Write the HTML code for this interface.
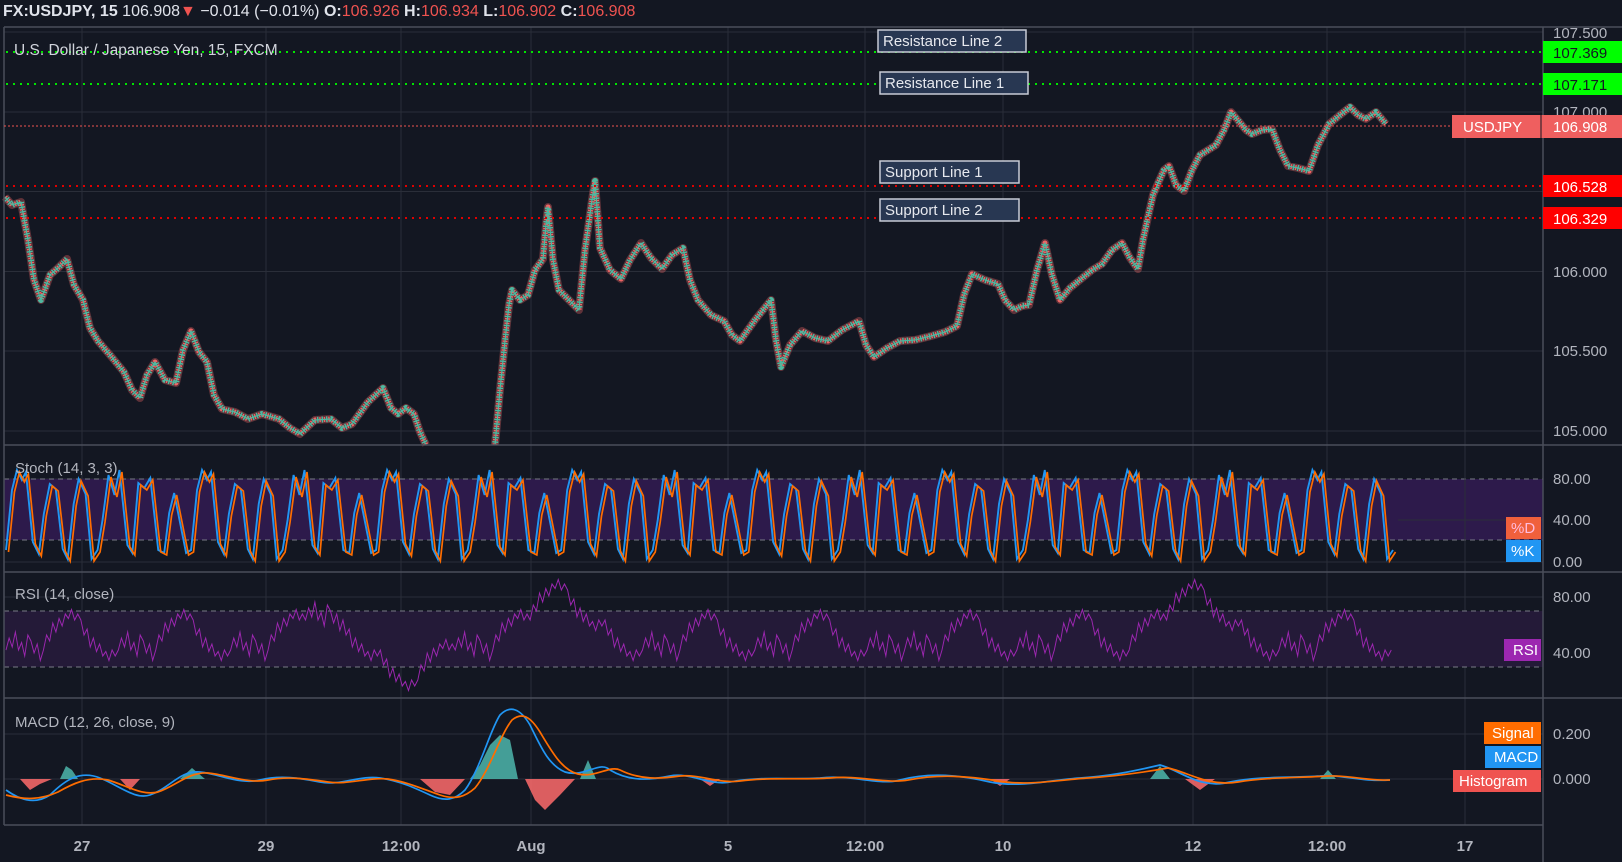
<!DOCTYPE html>
<html><head><meta charset="utf-8">
<style>
html,body{margin:0;padding:0;background:#131722;width:1622px;height:862px;overflow:hidden;}
svg{position:absolute;left:0;top:0}
text{font-family:"Liberation Sans",sans-serif;}
</style></head><body>
<svg width="1622" height="862" xmlns="http://www.w3.org/2000/svg">
<rect width="1622" height="862" fill="#131722"/>
<g stroke="#2a2e39" stroke-width="1">
<path d="M82 27V825M266 27V825M401 27V825M531 27V825M728 27V825M865 27V825M1003 27V825M1193 27V825M1327 27V825M1465 27V825"/>
<path d="M4 32H1543M4 112H1543M4 191.5H1543M4 271.5H1543M4 351H1543M4 431H1543M4 479H1543M4 520H1543M4 562H1543M4 597H1543M4 653H1543M4 734H1543M4 779H1543"/>
</g>
<rect x="4" y="479" width="1539" height="61" fill="#2d1a4b"/>
<rect x="4" y="611" width="1539" height="56" fill="#241a38"/>
<g stroke="#787b86" stroke-width="1" stroke-dasharray="5,4">
<path d="M4 479H1543M4 540H1543M4 611H1543M4 667H1543"/>
</g>
<defs>
<path id="pr" d="M5 197L12 205L21 202L28 240L34 280L41 300L50 275L58 268L67 259L74 285L83 300L90 328L98 341L110 355L124 372L132 390L140 398L147 375L155 362L165 380L176 383L183 350L191 331L199 352L207 362L214 395L222 409L235 412L248 419L262 414L279 419L290 428L300 434L315 420L331 419L342 428L352 424L368 402L383 388L391 408L398 414L406 408L414 414L420 432L426 445 M495 445L500 390L505 341L509 305L512 290L520 300L528 295L535 270L543 259L546 225L548 207L553 260L559 290L569 300L579 310L585 250L592 200L595 181L600 248L610 270L621 279L630 260L641 243L651 258L662 269L672 255L683 248L690 280L698 300L711 315L724 321L732 335L740 341L755 320L771 300L776 340L781 367L790 345L802 331L815 338L828 341L842 330L859 321L866 345L874 357L887 348L900 341L915 340L931 336L945 332L957 326L964 295L972 274L985 280L998 284L1005 300L1014 310L1022 306L1029 305L1037 270L1045 243L1052 275L1060 300L1070 288L1081 279L1092 270L1102 264L1112 250L1122 243L1130 258L1138 269L1143 240L1148 217L1153 195L1159 181L1164 170L1169 166L1176 185L1184 191L1192 170L1200 155L1208 150L1216 145L1224 130L1231 112L1236 118L1241 124L1246 130L1252 134L1262 130L1272 129L1280 150L1288 166L1298 168L1309 171L1318 145L1329 124L1340 115L1350 107L1358 115L1366 119L1376 112L1386 124"/>
<path id="st" d="M6 540 l6 -60 l5 -20 l5 10 l4 -8 l7 70 l6 12 l5 -40 l6 -30 l6 5 l7 60 l5 10 l6 -55 l5 -25 l7 15 l6 65 l6 -9 l5 -30 l6 -45 l6 20 l5 -25 l8 75 l5 8 l6 -70 l6 5 l6 -10 l8 72 l6 3 l5 -40 l5 -20 l6 30 l6 30 l5 -3 l6 -60 l5 -20 l5 10 l4 -8 l7 70 l6 12 l5 -40 l6 -30 l6 5 l7 60 l5 10 l6 -55 l5 -25 l7 15 l6 65 l6 -9 l5 -30 l6 -45 l6 20 l5 -25 l8 75 l5 8 l6 -70 l6 5 l6 -10 l8 72 l6 3 l5 -40 l5 -20 l6 30 l6 30 l5 -3 l6 -60 l5 -20 l5 10 l4 -8 l7 70 l6 12 l5 -40 l6 -30 l6 5 l7 60 l5 10 l6 -55 l5 -25 l7 15 l6 65 l6 -9 l5 -30 l6 -45 l6 20 l5 -25 l8 75 l5 8 l6 -70 l6 5 l6 -10 l8 72 l6 3 l5 -40 l5 -20 l6 30 l6 30 l5 -3 l6 -60 l5 -20 l5 10 l4 -8 l7 70 l6 12 l5 -40 l6 -30 l6 5 l7 60 l5 10 l6 -55 l5 -25 l7 15 l6 65 l6 -9 l5 -30 l6 -45 l6 20 l5 -25 l8 75 l5 8 l6 -70 l6 5 l6 -10 l8 72 l6 3 l5 -40 l5 -20 l6 30 l6 30 l5 -3 l6 -60 l5 -20 l5 10 l4 -8 l7 70 l6 12 l5 -40 l6 -30 l6 5 l7 60 l5 10 l6 -55 l5 -25 l7 15 l6 65 l6 -9 l5 -30 l6 -45 l6 20 l5 -25 l8 75 l5 8 l6 -70 l6 5 l6 -10 l8 72 l6 3 l5 -40 l5 -20 l6 30 l6 30 l5 -3 l6 -60 l5 -20 l5 10 l4 -8 l7 70 l6 12 l5 -40 l6 -30 l6 5 l7 60 l5 10 l6 -55 l5 -25 l7 15 l6 65 l6 -9 l5 -30 l6 -45 l6 20 l5 -25 l8 75 l5 8 l6 -70 l6 5 l6 -10 l8 72 l6 3 l5 -40 l5 -20 l6 30 l6 30 l5 -3 l6 -60 l5 -20 l5 10 l4 -8 l7 70 l6 12 l5 -40 l6 -30 l6 5 l7 60 l5 10 l6 -55 l5 -25 l7 15 l6 65 l6 -9 l5 -30 l6 -45 l6 20 l5 -25 l8 75 l5 8 l6 -70 l6 5 l6 -10 l8 72 l6 3 l5 -40 l5 -20 l6 30 l6 30 l5 -3 l6 -60 l5 -20 l5 10 l4 -8 l7 70 l6 12 l5 -40 l6 -30 l6 5 l7 60 l5 10 l6 -55 l5 -25 l7 15 l6 65 l6 -9"/>
</defs>
<use href="#pr" stroke="#ef6464" stroke-width="8" fill="none" opacity="0.35" stroke-linejoin="round"/>
<use href="#pr" stroke="#ef6464" stroke-width="5" fill="none" stroke-dasharray="1.5,3" stroke-linejoin="round"/>
<use href="#pr" stroke="#4fb8a0" stroke-width="6" fill="none" stroke-dasharray="1.5,3" stroke-dashoffset="2.2" stroke-linejoin="round"/>
<use href="#pr" stroke="#4fb8a0" stroke-width="1.2" fill="none" stroke-linejoin="round"/>
<g transform="matrix(0.995 0 0 1 0.03 10)">
<use href="#st" stroke="#2196f3" stroke-width="1.9" fill="none"/>
<use href="#st" stroke="#ff6d00" stroke-width="1.7" fill="none" transform="translate(2.5,2)"/>
</g>
<g transform="matrix(1.04 0 0 1.5 -0.24 -295)">
<path fill="none" stroke="#9c27b0" stroke-width="0.9" d="M6 630
l3 -8 l3 6 l3 -10 l3 12 l3 -5 l3 9 l3 -14 l3 4 l3 8 l3 -6 l3 11 l3 -7
l3 -10 l3 4 l3 -12 l3 6 l3 -9 l3 5 l3 -8 l3 3 l3 -6 l3 7 l3 -4 l3 4
l3 10 l3 -4 l3 12 l3 -6 l3 9 l3 -5 l3 8 l3 -3 l3 6 l3 -7 l3 4 l3 -4
l3 -8 l3 6 l3 -10 l3 12 l3 -5 l3 9 l3 -14 l3 4 l3 8 l3 -6 l3 11 l3 -7
l3 -10 l3 4 l3 -12 l3 6 l3 -9 l3 5 l3 -8 l3 3 l3 -6 l3 7 l3 -4 l3 4
l3 10 l3 -4 l3 12 l3 -6 l3 9 l3 -5 l3 8 l3 -3 l3 6 l3 -7 l3 4 l3 -4
l3 -8 l3 6 l3 -10 l3 12 l3 -5 l3 9 l3 -14 l3 4 l3 8 l3 -6 l3 11 l3 -7
l3 -10 l3 4 l3 -12 l3 6 l3 -9 l3 5 l3 -8 l3 3 l3 -6 l3 7 l3 -4 l3 4
l3 -8 l3 6 l3 -10 l3 12 l3 -5 l3 9 l3 -14 l3 4 l3 8 l3 -6 l3 11 l3 -7
l3 10 l3 -4 l3 12 l3 -6 l3 9 l3 -5 l3 8 l3 -3 l3 6 l3 -7 l3 4 l3 -4
l3 10 l3 -4 l3 12 l3 -6 l3 9 l3 -5 l3 8 l3 -3 l3 6 l3 -7 l3 4 l3 -4
l3 -10 l3 4 l3 -12 l3 6 l3 -9 l3 5 l3 -8 l3 3 l3 -6 l3 7 l3 -4 l3 4
l3 -8 l3 6 l3 -10 l3 12 l3 -5 l3 9 l3 -14 l3 4 l3 8 l3 -6 l3 11 l3 -7
l3 -10 l3 4 l3 -12 l3 6 l3 -9 l3 5 l3 -8 l3 3 l3 -6 l3 7 l3 -4 l3 4
l3 -10 l3 4 l3 -12 l3 6 l3 -9 l3 5 l3 -8 l3 3 l3 -6 l3 7 l3 -4 l3 4
l3 10 l3 -4 l3 12 l3 -6 l3 9 l3 -5 l3 8 l3 -3 l3 6 l3 -7 l3 4 l3 -4
l3 10 l3 -4 l3 12 l3 -6 l3 9 l3 -5 l3 8 l3 -3 l3 6 l3 -7 l3 4 l3 -4
l3 -8 l3 6 l3 -10 l3 12 l3 -5 l3 9 l3 -14 l3 4 l3 8 l3 -6 l3 11 l3 -7
l3 -10 l3 4 l3 -12 l3 6 l3 -9 l3 5 l3 -8 l3 3 l3 -6 l3 7 l3 -4 l3 4
l3 10 l3 -4 l3 12 l3 -6 l3 9 l3 -5 l3 8 l3 -3 l3 6 l3 -7 l3 4 l3 -4
l3 -8 l3 6 l3 -10 l3 12 l3 -5 l3 9 l3 -14 l3 4 l3 8 l3 -6 l3 11 l3 -7
l3 -10 l3 4 l3 -12 l3 6 l3 -9 l3 5 l3 -8 l3 3 l3 -6 l3 7 l3 -4 l3 4
l3 10 l3 -4 l3 12 l3 -6 l3 9 l3 -5 l3 8 l3 -3 l3 6 l3 -7 l3 4 l3 -4
l3 -8 l3 6 l3 -10 l3 12 l3 -5 l3 9 l3 -14 l3 4 l3 8 l3 -6 l3 11 l3 -7
l3 -8 l3 6 l3 -10 l3 12 l3 -5 l3 9 l3 -14 l3 4 l3 8 l3 -6 l3 11 l3 -7
l3 -10 l3 4 l3 -12 l3 6 l3 -9 l3 5 l3 -8 l3 3 l3 -6 l3 7 l3 -4 l3 4
l3 10 l3 -4 l3 12 l3 -6 l3 9 l3 -5 l3 8 l3 -3 l3 6 l3 -7 l3 4 l3 -4
l3 -8 l3 6 l3 -10 l3 12 l3 -5 l3 9 l3 -14 l3 4 l3 8 l3 -6 l3 11 l3 -7
l3 -10 l3 4 l3 -12 l3 6 l3 -9 l3 5 l3 -8 l3 3 l3 -6 l3 7 l3 -4 l3 4
l3 10 l3 -4 l3 12 l3 -6 l3 9 l3 -5 l3 8 l3 -3 l3 6 l3 -7 l3 4 l3 -4
l3 -10 l3 4 l3 -12 l3 6 l3 -9 l3 5 l3 -8 l3 3 l3 -6 l3 7 l3 -4 l3 4
l3 -10 l3 4 l3 -12 l3 6 l3 -9 l3 5 l3 -8 l3 3 l3 -6 l3 7 l3 -4 l3 4
l3 10 l3 -4 l3 12 l3 -6 l3 9 l3 -5 l3 8 l3 -3 l3 6 l3 -7 l3 4 l3 -4
l3 10 l3 -4 l3 12 l3 -6 l3 9 l3 -5 l3 8 l3 -3 l3 6 l3 -7 l3 4 l3 -4
l3 -8 l3 6 l3 -10 l3 12 l3 -5 l3 9 l3 -14 l3 4 l3 8 l3 -6 l3 11 l3 -7
l3 -10 l3 4 l3 -12 l3 6 l3 -9 l3 5 l3 -8 l3 3 l3 -6 l3 7 l3 -4 l3 4
l3 10 l3 -4 l3 12 l3 -6 l3 9 l3 -5 l3 8 l3 -3 l3 6 l3 -7 l3 4 l3 -4"/>
</g>
<g fill="#4db6ac" opacity="0.85">
<path d="M60 779L66 766L72 770L78 779Z M180 779L192 768L205 779Z M470 779L480 765L490 745L500 735L510 740L518 779Z M580 779L588 760L596 779Z M1150 779L1160 766L1170 779Z M1320 779L1328 770L1336 779Z"/>
</g>
<g fill="#ff6b6b" opacity="0.85">
<path d="M6 779L20 779L30 790L40 784L52 779Z M120 779L130 790L140 779Z M420 779L435 792L450 795L465 779Z M525 779L535 800L545 810L560 795L575 779Z M700 779L710 786L720 779Z M990 779L1000 786L1010 779Z M1185 779L1200 790L1215 779Z"/>
</g>
<path fill="none" stroke="#2196f3" stroke-width="1.7" d="M6 790 C20 800,35 805,50 795 C65 780,80 770,100 778 C120 786,135 800,150 795 C170 788,180 770,200 772 C220 774,240 785,260 780 C280 775,300 778,320 782 C340 786,360 775,380 778 C400 781,415 788,430 795 C445 802,455 800,465 790 C480 770,490 730,500 715 C510 705,520 708,530 725 C540 745,548 765,565 772 C585 778,600 760,610 770 C630 782,650 780,670 776 C690 772,710 786,730 782 C760 776,790 780,820 778 C850 774,880 786,900 780 C930 772,960 775,990 782 C1020 788,1050 780,1080 778 C1110 776,1130 772,1160 765 C1180 770,1200 790,1230 782 C1260 776,1290 778,1320 776 C1340 774,1360 782,1390 780"/>
<path fill="none" stroke="#ff6d00" stroke-width="1.7" d="M6 795 C25 800,40 800,58 792 C72 784,88 776,108 780 C128 786,142 796,158 792 C176 786,188 772,208 773 C228 775,248 784,268 780 C288 776,308 779,328 782 C348 785,368 777,388 779 C408 782,425 790,440 795 C455 800,465 797,475 788 C490 770,500 735,512 720 C522 712,530 716,540 732 C552 752,562 770,578 774 C596 778,610 765,620 770 C640 780,660 779,680 776 C700 774,720 784,740 781 C770 777,800 780,830 778 C860 775,885 784,908 780 C938 774,968 776,998 781 C1028 786,1058 780,1088 778 C1118 776,1140 773,1168 768 C1188 772,1208 787,1238 782 C1268 777,1298 778,1328 776 C1348 775,1368 781,1390 780"/>
<rect x="1398" y="446" width="144" height="125" fill="#131722"/>
<rect x="1398" y="479" width="144" height="61" fill="#2d1a4b"/>
<g stroke="#787b86" stroke-width="1" stroke-dasharray="5,4"><path d="M1398 479H1543M1398 540H1543"/></g>
<g stroke="#2a2e39" stroke-width="1"><path d="M1465 446V571M1398 520H1543M1398 562H1543"/></g>
<g stroke="#4a4e5a" stroke-width="1.5">
<path d="M4 27H1622M4 445H1622M4 572H1622M4 698H1622M4 825H1543M1543 27V862M4 27V825"/>
</g>
<g stroke-width="2" stroke-dasharray="2,5">
<line x1="6" y1="52" x2="1543" y2="52" stroke="#00e600"/>
<line x1="6" y1="84" x2="1543" y2="84" stroke="#00e600"/>
<line x1="6" y1="186" x2="1543" y2="186" stroke="#e00000"/>
<line x1="6" y1="218" x2="1543" y2="218" stroke="#e00000"/>
</g>
<line x1="4" y1="126" x2="1452" y2="126" stroke="#ef5350" stroke-width="1" stroke-dasharray="2,2"/>
<g font-size="15" fill="#e6e8ee">
<rect x="878" y="30" width="148" height="22" fill="#283752" stroke="#c8ccd6" stroke-width="1.5"/><text x="883" y="46">Resistance Line 2</text>
<rect x="880" y="72" width="148" height="22" fill="#283752" stroke="#c8ccd6" stroke-width="1.5"/><text x="885" y="88">Resistance Line 1</text>
<rect x="880" y="161" width="139" height="22" fill="#283752" stroke="#c8ccd6" stroke-width="1.5"/><text x="885" y="177">Support Line 1</text>
<rect x="880" y="199" width="139" height="22" fill="#283752" stroke="#c8ccd6" stroke-width="1.5"/><text x="885" y="215">Support Line 2</text>
</g>
<text x="3" y="16" font-size="16" fill="#e0e3eb"><tspan font-weight="bold">FX:USDJPY, 15</tspan> <tspan>106.908</tspan><tspan fill="#ef5350">▼</tspan> <tspan>−0.014 (−0.01%)</tspan> <tspan font-weight="bold">O:</tspan><tspan fill="#ef5350">106.926</tspan> <tspan font-weight="bold">H:</tspan><tspan fill="#ef5350">106.934</tspan> <tspan font-weight="bold">L:</tspan><tspan fill="#ef5350">106.902</tspan> <tspan font-weight="bold">C:</tspan><tspan fill="#ef5350">106.908</tspan></text>
<text x="14" y="55" font-size="15.5" fill="#d1d4dc">U.S. Dollar / Japanese Yen, 15, FXCM</text>
<text x="15" y="473" font-size="15" fill="#b2b5be">Stoch (14, 3, 3)</text>
<text x="15" y="599" font-size="15" fill="#b2b5be">RSI (14, close)</text>
<text x="15" y="727" font-size="15" fill="#b2b5be">MACD (12, 26, close, 9)</text>
<g font-size="15" fill="#b2b5be">
<text x="1553" y="38">107.500</text><text x="1553" y="117">107.000</text>
<text x="1553" y="277">106.000</text><text x="1553" y="356">105.500</text><text x="1553" y="436">105.000</text>
<text x="1553" y="484">80.00</text><text x="1553" y="525">40.00</text><text x="1553" y="567">0.00</text>
<text x="1553" y="602">80.00</text><text x="1553" y="658">40.00</text>
<text x="1553" y="739">0.200</text><text x="1553" y="784">0.000</text>
</g>
<g font-size="15">
<rect x="1543" y="41" width="79" height="22" fill="#00ff00"/><text x="1553" y="58" fill="#131722">107.369</text>
<rect x="1543" y="73" width="79" height="22" fill="#00ff00"/><text x="1553" y="90" fill="#131722">107.171</text>
<rect x="1452" y="115" width="170" height="23" fill="#ef5f5f"/><text x="1463" y="132" fill="#fff">USDJPY</text><text x="1553" y="132" fill="#fff">106.908</text>
<line x1="1541" y1="115" x2="1541" y2="138" stroke="#131722"/>
<rect x="1543" y="175" width="79" height="22" fill="#ff0000"/><text x="1553" y="192" fill="#fff">106.528</text>
<rect x="1543" y="207" width="79" height="22" fill="#ff0000"/><text x="1553" y="224" fill="#fff">106.329</text>
<rect x="1506" y="517" width="35" height="22" fill="#f0603c"/><text x="1511" y="533" fill="#fbd">%D</text>
<rect x="1506" y="540" width="35" height="22" fill="#2196f3"/><text x="1511" y="556" fill="#fff">%K</text>
<rect x="1504" y="639" width="37" height="22" fill="#9c27b0"/><text x="1513" y="655" fill="#fff">RSI</text>
<rect x="1484" y="722" width="57" height="22" fill="#ff6d00"/><text x="1492" y="738" fill="#fff">Signal</text>
<rect x="1485" y="746" width="56" height="22" fill="#2196f3"/><text x="1494" y="762" fill="#fff">MACD</text>
<rect x="1453" y="770" width="88" height="22" fill="#ef5350"/><text x="1459" y="786" fill="#fff">Histogram</text>
</g>
<g font-size="15" fill="#b2b5be" font-weight="bold" text-anchor="middle">
<text x="82" y="851">27</text><text x="266" y="851">29</text><text x="401" y="851">12:00</text><text x="531" y="851">Aug</text><text x="728" y="851">5</text><text x="865" y="851">12:00</text><text x="1003" y="851">10</text><text x="1193" y="851">12</text><text x="1327" y="851">12:00</text><text x="1465" y="851">17</text>
</g>
</svg>
</body></html>
